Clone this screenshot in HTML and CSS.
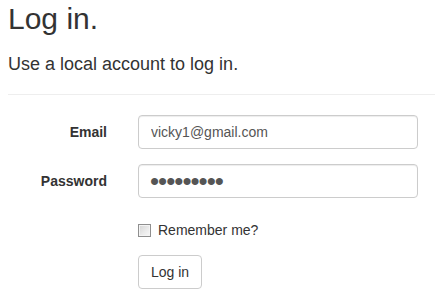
FILE: index.html
```html
<!DOCTYPE html>
<html lang="en">
<head>
  <meta charset="UTF-8" />
  <title>Log in</title>
  <link rel="stylesheet" href="styles.css">
</head>
<body>
  <main class="page">
    <h2 class="title">Log in.</h2>
    <section>
      <form class="login-form" novalidate>
        <h4 class="subtitle">Use a local account to log in.</h4>
        <hr />
        <div class="form-grid">
          <label class="control-label" for="Email">Email</label>
          <input class="form-control" type="email" id="Email" name="Email" value="vicky1@gmail.com" />

          <label class="control-label" for="Password">Password</label>
          <input class="form-control" type="password" id="Password" name="Password" value="vicky1234" />

          <label class="checkbox" for="RememberMe">
            <input type="checkbox" id="RememberMe" name="RememberMe" /> Remember me?
          </label>

          <div class="actions">
            <button type="submit" class="btn">Log in</button>
          </div>
        </div>
      </form>
    </section>
  </main>
</body>
</html>
```

FILE: styles.css
```css
/* Base */
*, *::before, *::after {
  box-sizing: border-box;
}
html {
  font-family: "Liberation Sans", Arial, Helvetica, sans-serif;
  font-size: 14px;
  color: #333;
  background: #fff;
}
body {
  margin: 0;
  line-height: 1.42857;
}

.page {
  padding: 0 0 0 8px;
}

.title {
  margin: 2px 0 0;
  font-size: 30px;
  font-weight: 400;
  line-height: 33px;
  color: #333;
}

.subtitle {
  margin: 19px 0 0;
  font-size: 18px;
  font-weight: 400;
  line-height: 20px;
}

hr {
  margin: 20px 0;
  border: 0;
  border-top: 1px solid #eee;
}

/* FORM */
.form-grid {
  display: grid;
  grid-template-columns: 99px 280px;
  column-gap: 31px;
  row-gap: 15px;
  align-items: start;
}

.control-label {
  padding-top: 7px;
  text-align: right;
  font-weight: 700;
  line-height: 20px;
}

.form-control {
  display: block;
  width: 100%;
  height: 34px;
  padding: 6px 12px;
  font-family: inherit;
  font-size: 14px;
  line-height: 20px;
  color: #555;
  background: #fff;
  border: 1px solid #ccc;
  border-radius: 4px;
  box-shadow: inset 0 1px 1px rgba(0, 0, 0, 0.075);
  outline: none;
}

.form-control[type="password"] {
  padding: 0 11px;
  font-size: 26px;
  line-height: 32px;
  letter-spacing: -1px;
}

.checkbox {
  grid-column: 2;
  display: flex;
  align-items: center;
  gap: 7px;
  min-height: 27px;
  padding-top: 7px;
  line-height: 20px;
  color: #333;
  cursor: pointer;
}

.checkbox input {
  appearance: none;
  -webkit-appearance: none;
  margin: 0;
  width: 13px;
  height: 13px;
  border: 1px solid #8f8f8f;
  background: linear-gradient(135deg, #d4d4d4 0%, #ececec 60%, #f7f7f7 100%);
  box-shadow: inset 0 0 0 1px #f4f4f4;
}

.actions {
  grid-column: 2;
}

.btn {
  display: inline-block;
  height: 34px;
  padding: 6px 12px;
  font-family: inherit;
  font-size: 14px;
  line-height: 20px;
  color: #333;
  background: #fff;
  border: 1px solid #ccc;
  border-radius: 4px;
  cursor: pointer;
}
.btn:hover {
  background: #e6e6e6;
  border-color: #adadad;
}
```
